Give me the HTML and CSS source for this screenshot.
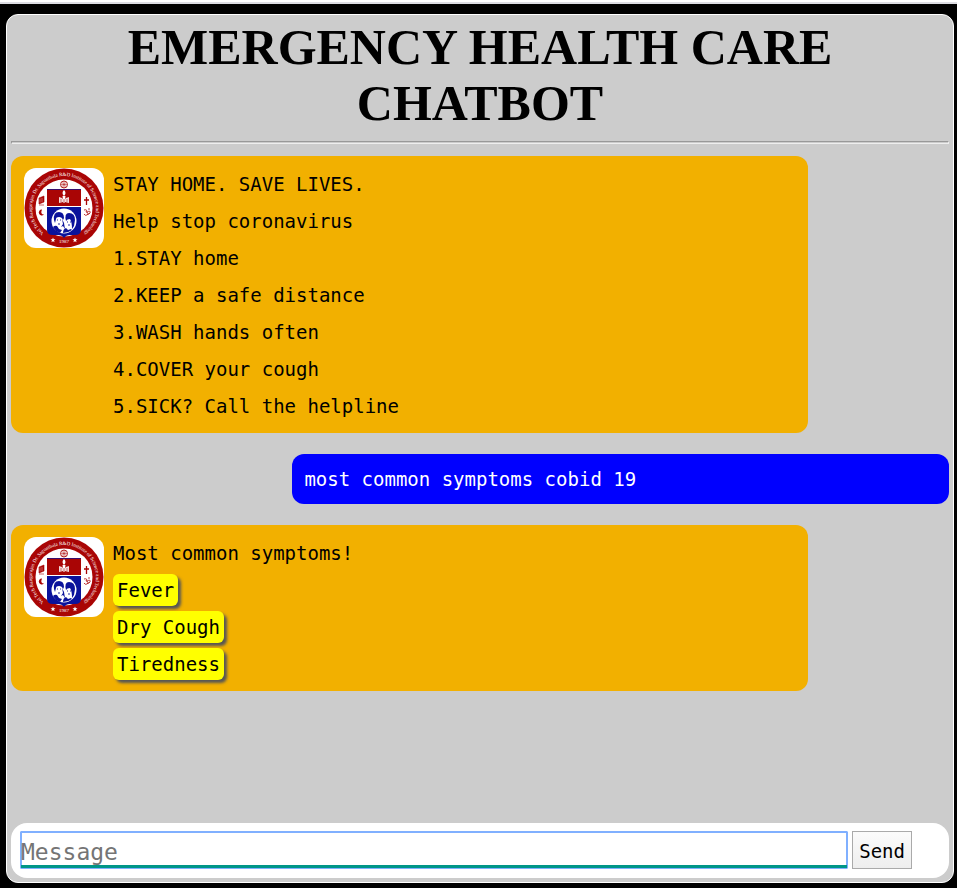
FILE: index.html
```html
<!DOCTYPE html>
<html lang="en">
<head>
<meta charset="utf-8">
<meta name="viewport" content="width=device-width, initial-scale=1">
<title>Emergency Health Care Chatbot</title>
<link rel="stylesheet" href="styles.css">
</head>
<body>
<svg class="defs" aria-hidden="true">
  <defs>
    <path id="ring" d="M20 65 A32 32 0 1 1 60 65"/>
    <symbol id="crest" viewBox="0 0 80 80">
      <circle cx="40" cy="40" r="39.5" fill="#a90505"/>
      <circle cx="40" cy="40" r="28.5" fill="#fff"/>
      <text class="ring-text"><textPath href="#ring">Vel Tech Rangarajan Dr. Sagunthala R&amp;D Institute of Science and Technology</textPath></text>
      <!-- wheel -->
      <g fill="none" stroke="#b32020" stroke-width="1">
        <circle cx="40" cy="16.500" r="3.500"/>
        <path d="M40 13v7M36.500 16.500h7M37.500 14l5 5M42.500 14l-5 5" stroke-width=".6"/>
      </g>
      <!-- shield -->
      <path d="M23 21h34v18H23z" fill="#a90505"/>
      <path d="M23 39h34v23q0 5-6 5h-5q-4 0-6 3q-2-3-6-3h-5q-6 0-6-5z" fill="#0a129b"/>
      <path d="M23 38.500h34" stroke="#fff" stroke-width="1"/>
      <path d="M23 21.500h34" stroke="#0a129b" stroke-width=".7"/>
      <!-- torch and book -->
      <path d="M40 22q3 3 0 6q-3-3 0-6z" fill="#fff"/>
      <path d="M38.500 28h3l-1 7h-1z" fill="#fff"/>
      <path d="M35 29l3 1 2 2 2-2 3-1v6l-4-1-1 1-1-1-4 1z" fill="#f2dada"/>
      <path d="M37 31v3M43 31v3M40 31v4" stroke="#a90505" stroke-width=".5"/>
      <!-- portraits: two heads turned to the right over their shoulders -->
      <circle cx="40" cy="53" r="12.500" fill="#fff"/>
      <g fill="#0a129b">
        <path d="M30 52q-1-8 5-8q5 0 5 6l-1 2q-1-3-4-3q-3 0-3 2l-1 4z"/>
        <path d="M42 53q-2-8 3-8q6 0 6 7l-1 6-2 3q0-7-2-10q-3 0-4 2z"/>
        <path d="M29 59q2-2 4-1l2 3 3 1-2 3q-4-1-7-6zM39 65q0-4 3-5l2 2 3-1 1 1q-4 3-9 3z"/>
        <path d="M38 51l1 5-2 3 2-1 2 3-1-6z"/>
      </g>
      <path d="M33 52h1M36 52h1M34 56h2M43 54h1M46 54h1M44 57h2" stroke="#0a129b" stroke-width=".9"/>
      <!-- side emblems -->
      <path d="M15 30l5-2v6l-5 2zM15 37h5" fill="#a90505" stroke="#a90505" stroke-width=".6"/>
      <path d="M16 30.500v4M18 30v4" stroke="#e6b0b0" stroke-width=".5"/>
      <path d="M18 41.500a3 3 0 1 0 2 5q-4 0-2-5z" fill="#a90505"/>
      <path d="M62.500 29v8M60 32h5" stroke="#a90505" stroke-width="1.300"/>
      <path d="M60 42q4-1 2 2q4 1 1 3q-2 1-3-1M63 44q4-2 3 1q-1 2-3 1M64 41h2" fill="none" stroke="#a90505" stroke-width=".8"/>
      <!-- base of the ring -->
      <g fill="#fff">
        <path id="star" d="M29 69.500l.7 1.800h1.800l-1.500 1.100.6 1.900-1.600-1.100-1.600 1.100.6-1.900-1.500-1.100h1.800z"/>
        <use href="#star" x="22"/>
      </g>
      <text class="ring-text" x="40" y="75" text-anchor="middle">1987</text>
    </symbol>
  </defs>
</svg>
<div class="page">
  <main class="chat">
    <h1>EMERGENCY HEALTH CARE CHATBOT</h1>
    <hr>
    <section class="messages">
      <article class="bubble bot">
        <svg class="avatar" role="img" aria-label="Institute crest"><use href="#crest"/></svg>
        <div class="lines">
          <p>STAY HOME. SAVE LIVES.</p>
          <p>Help stop coronavirus</p>
          <p>1.STAY home</p>
          <p>2.KEEP a safe distance</p>
          <p>3.WASH hands often</p>
          <p>4.COVER your cough</p>
          <p>5.SICK? Call the helpline</p>
        </div>
      </article>
      <article class="bubble user"><p>most common symptoms cobid 19</p></article>
      <article class="bubble bot">
        <svg class="avatar" role="img" aria-label="Institute crest"><use href="#crest"/></svg>
        <div class="lines">
          <p>Most common symptoms!</p>
          <p><span class="tag">Fever</span></p>
          <p><span class="tag">Dry Cough</span></p>
          <p><span class="tag">Tiredness</span></p>
        </div>
      </article>
    </section>
    <form class="composer">
      <input type="text" placeholder="Message" aria-label="Message">
      <button type="button">Send</button>
    </form>
  </main>
</div>
</body>
</html>
```
FILE: styles.css
```css
* {
  box-sizing: border-box;
}

body {
  margin: 0;
  background: #000;
  color: #000;
  font-family: "DejaVu Sans Mono", monospace;
  font-size: 19px;
  line-height: 37px;
}

.defs {
  position: absolute;
  width: 0;
  height: 0;
}

.page {
  display: flex;
  min-height: 100vh;
  padding: 12px 3px 5px 6px;
  border-top: 2px solid #fff;
  box-shadow: inset 0 2px #dcdce2;
}

.chat {
  display: flex;
  flex: 1;
  flex-direction: column;
  min-width: 0;
  padding: 4px;
  border: 1px solid #fff;
  border-radius: 12px;
  background: #ccc;
}

h1 {
  margin: 0;
  font-family: "Liberation Serif", serif;
  font-size: 50px;
  line-height: 56px;
  text-align: center;
}

hr {
  width: 100%;
  height: 3px;
  margin: 10px 0 12px;
  border: 1px solid;
  border-color: #999 #eee #eee #999;
}

.messages {
  display: flex;
  flex: 1;
  flex-direction: column;
  gap: 21px;
}

p {
  margin: 0;
}

.bubble {
  border-radius: 12px;
}

.bot {
  display: flex;
  gap: 9px;
  width: 85%;
  padding: 10px 12px 8px 13px;
  background: #f2b000;
}

.avatar {
  flex: none;
  width: 80px;
  height: 80px;
  margin-top: 2px;
  border-radius: 12px;
  background: #fff;
}

.ring-text {
  fill: #fff;
  font-family: "Liberation Serif", serif;
  font-size: 5px;
}

.user {
  align-self: flex-end;
  width: 70%;
  padding: 7px 12px 6px;
  background: #00f;
  color: #fff;
}

.tag {
  display: block;
  width: fit-content;
  padding: 0 4px;
  border-radius: 6px;
  background: #ff0;
  box-shadow: 3px 3px 3px #555;
  line-height: 32px;
}

.lines p:has(.tag) {
  height: 37px;
  padding-top: 2px;
}

.composer {
  display: flex;
  gap: 4px;
  padding: 8px 37px 9px 9px;
  border-radius: 16px;
  background: #fff;
}

input {
  flex: 1;
  min-width: 0;
  height: 38px;
  padding: 3px 0 0;
  border: 1px solid #80b0ff;
  border-radius: 1px;
  outline: 0;
  background: #fff;
  box-shadow: inset 0 -3px #009688, inset 0 0 0 1px #80b0ff;
  font: 23px "DejaVu Sans Mono", monospace;
}

input::placeholder {
  color: #757575;
}

button {
  height: 38px;
  padding: 2px 6px 0;
  border: 1px solid #aaa;
  border-radius: 0;
  background: linear-gradient(#fbfbfb, #eee);
  color: #000;
  font: 19px "DejaVu Sans Mono", monospace;
}
```
